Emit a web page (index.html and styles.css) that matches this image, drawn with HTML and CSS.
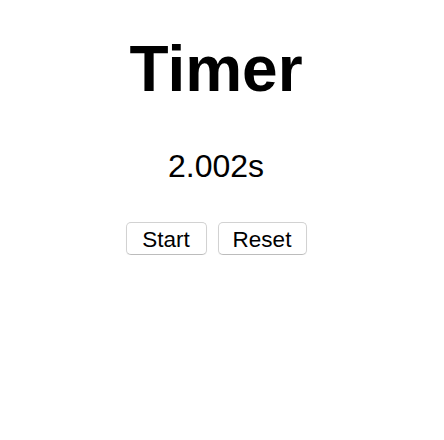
FILE: index.html
```html
<!DOCTYPE html>
<html>
<head>
<meta charset="utf-8">
<link rel="stylesheet" href="styles.css">
</head>
<body>
<div class="app">
  <h1 class="title">Timer</h1>
  <div class="time">2.002s</div>
  <div class="controls">
    <button class="btn">Start</button>
    <button class="btn">Reset</button>
  </div>
</div>
</body>
</html>
```
FILE: styles.css
```css
html, body {
  margin: 0;
  padding: 0;
  background: #ffffff;
}
.app {
  font-family: "Liberation Sans", Arial, sans-serif;
  color: #000;
  text-align: center;
  padding: 37px 12px 0 0;
}
.title {
  margin: 0;
  font-size: 64px;
  line-height: 64px;
  font-weight: bold;
}
.time {
  margin-top: 49px;
  font-size: 32px;
  line-height: 32px;
}
.controls {
  margin-top: 40px;
  display: flex;
  justify-content: center;
  gap: 11px;
}
.btn {
  font-family: "Liberation Sans", Arial, sans-serif;
  font-size: 22.5px;
  line-height: 33px;
  height: 33px;
  padding: 0;
  background: #ffffff;
  color: #000;
  border: 1px solid #d2d2d2;
  border-bottom-color: #bcbcbc;
  border-radius: 5px;
  box-shadow: 0 1px 1px rgba(0,0,0,0.05);
}
.btn:first-child {
  width: 81px;
}
.btn:last-child {
  width: 89px;
}
```
